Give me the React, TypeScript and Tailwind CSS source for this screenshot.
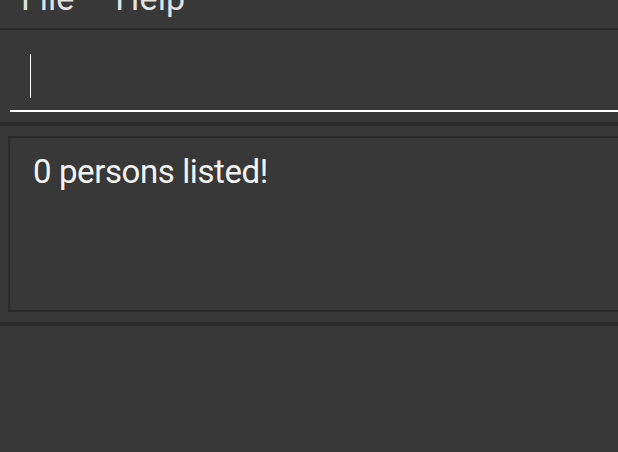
import React from "react";

export default function App() {
  return (
    <div className="w-[618px] h-[452px] overflow-hidden bg-[#383838] font-['Roboto',sans-serif] flex flex-col">
      {/* menu bar */}
      <div className="h-[30px] shrink-0 border-b-2 border-[#2b2b2b] flex items-end overflow-hidden">
        <div className="flex gap-[41px] pl-[21px] text-[34px] leading-[34px] text-[#e2e2e2] mb-[13px]">
          <span>File</span>
          <span>Help</span>
        </div>
      </div>
      {/* command box */}
      <div className="h-[92px] shrink-0 pl-[10px] pt-[24px]">
        <div className="w-[720px] h-[58px] border-b-2 border-white pl-[20px]">
          <div className="w-px h-[44px] bg-white" />
        </div>
      </div>
      <div className="h-[4px] shrink-0 bg-[#2b2b2b]" />
      {/* result display */}
      <div className="shrink-0 pt-[10px] pb-[10px] pl-[8px]">
        <div className="w-[720px] h-[176px] border-2 border-[#2b2b2b] pl-[23px] pt-[14px]">
          <div className="text-[33px] leading-[40px] tracking-[-0.4px] text-[#f4f4f4]">0 persons listed!</div>
        </div>
      </div>
      <div className="h-[4px] shrink-0 bg-[#2b2b2b]" />
      <div className="flex-1" />
    </div>
  );
}
